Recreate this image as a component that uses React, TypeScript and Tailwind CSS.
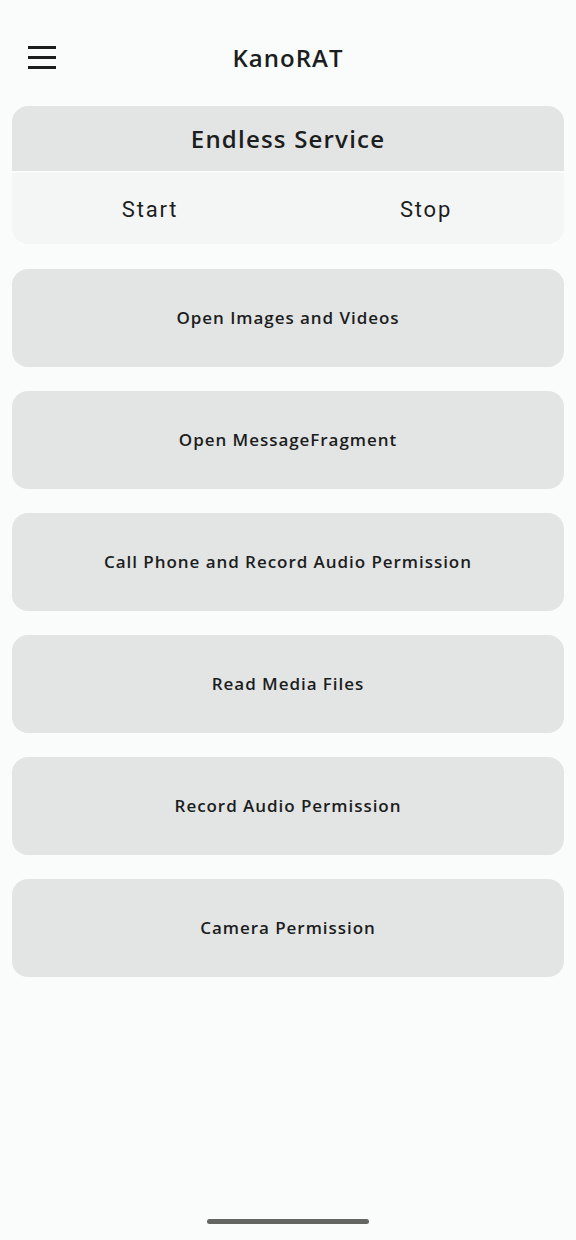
import React from "react";

const items = [
  "Open Images and Videos",
  "Open MessageFragment",
  "Call Phone and Record Audio Permission",
  "Read Media Files",
  "Record Audio Permission",
  "Camera Permission",
];

export default function App() {
  return (
    <div
      className="w-[576px] h-[1240px] bg-[#f9fcfb] flex flex-col text-[#1c1d1d]"
      style={{ fontFamily: '"Open Sans", "Noto Sans", sans-serif' }}
    >
      <div className="relative h-[106px] flex items-center justify-center pt-[10px]">
        <div className="absolute left-[28px] top-[46px] w-[28px] flex flex-col gap-[7px]">
          <div className="h-[3px] bg-[#1c1d1d]" />
          <div className="h-[3px] bg-[#1c1d1d]" />
          <div className="h-[3px] bg-[#1c1d1d]" />
        </div>
        <div className="text-[24px] font-semibold tracking-[1px] leading-none">KanoRAT</div>
      </div>

      <div className="mx-[12px] rounded-[16px] overflow-hidden">
        <div className="h-[65px] bg-[#e3e4e4] flex items-center justify-center">
          <span className="text-[24px] font-semibold tracking-[1.2px] leading-none">Endless Service</span>
        </div>
        <div className="h-[2px]" />
        <div className="h-[71px] bg-[#f4f5f5] grid grid-cols-2">
          <div
            className="flex items-center justify-center text-[22px] tracking-[1.8px] pt-[2px]"
            style={{ fontFamily: "Roboto, sans-serif" }}
          >
            Start
          </div>
          <div
            className="flex items-center justify-center text-[22px] tracking-[1.8px] pt-[2px]"
            style={{ fontFamily: "Roboto, sans-serif" }}
          >
            Stop
          </div>
        </div>
      </div>

      <div className="mt-[25px] mx-[12px] flex flex-col gap-[24px]">
        {items.map((t) => (
          <div
            key={t}
            className="h-[98px] rounded-[16px] bg-[#e3e5e5] flex items-center justify-center text-[17px] font-semibold tracking-[0.95px]"
          >
            {t}
          </div>
        ))}
      </div>

      <div className="flex-1" />
      <div className="flex justify-center pb-[16px]">
        <div className="w-[162px] h-[5px] rounded-full bg-[#636663]" />
      </div>
    </div>
  );
}
